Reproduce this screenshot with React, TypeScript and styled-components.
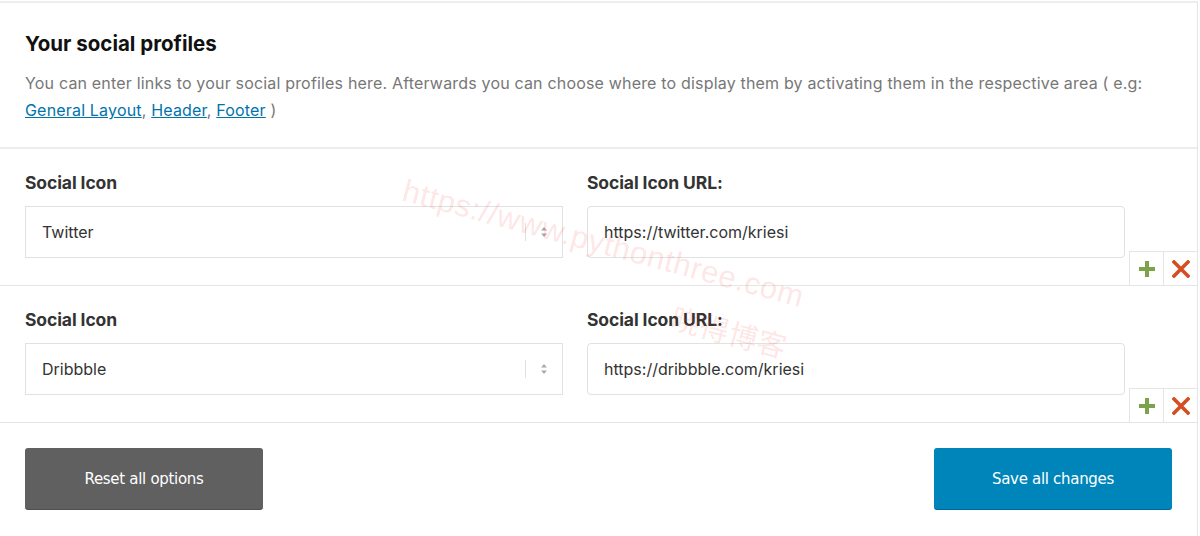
import React from "react";
import styled, { createGlobalStyle } from "styled-components";

const Global = createGlobalStyle`
  html, body { margin: 0; padding: 0; background: #fff; }
  body { font-family: Inter, "Liberation Sans", Arial, sans-serif; }
  * { box-sizing: border-box; }
`;

const Page = styled.div`
  position: relative;
  width: 1198px;
  height: 536px;
  margin-top: 1px;
  border-top: 2px solid #eeeeee;
  border-right: 1px solid #e5e5e5;
  overflow: hidden;
`;

const Intro = styled.section`
  padding: 27px 25px 23px 25px;
  border-bottom: 2px solid #ececec;
`;

const Title = styled.h3`
  margin: 0 0 12px 0;
  font-size: 20.5px;
  font-weight: 700;
  color: #111;
  line-height: 28px;
  letter-spacing: 0;
`;

const Desc = styled.p`
  margin: 0;
  font-size: 16px;
  line-height: 27px;
  color: #777;
  letter-spacing: 0.18px;
`;

const Link = styled.a`
  color: #0073aa;
  text-decoration: underline;
`;

const Row = styled.div`
  display: flex;
  border-bottom: 1px solid #e5e5e5;
`;

const Fields = styled.div`
  display: grid;
  grid-template-columns: 538px 538px;
  column-gap: 24px;
  padding: 22px 0 27px 25px;
`;

const Field = styled.div`
  display: flex;
  flex-direction: column;
`;

const Label = styled.label`
  font-size: 17.5px;
  font-weight: 700;
  color: #333;
  line-height: 24px;
  margin-bottom: 11px;
  letter-spacing: -0.1px;
`;

const SelectBox = styled.div`
  height: 52px;
  border: 1px solid #e1e1e1;
  display: flex;
  align-items: center;
  padding-left: 16px;
  font-size: 16px;
  color: #333;
  background: #fff;
`;

const SelectText = styled.span`
  flex: 1;
`;

const SelectSep = styled.span`
  width: 1px;
  height: 18px;
  background: #e0e0e0;
`;

const SelectArrows = styled.span`
  width: 36px;
  display: flex;
  justify-content: center;
  align-items: center;
`;

const InputBox = styled.div`
  height: 52px;
  border: 1px solid #e1e1e1;
  border-radius: 4px;
  display: flex;
  align-items: center;
  padding-left: 16px;
  font-size: 16px;
  color: #333;
`;

const Actions = styled.div`
  flex: 1;
  display: flex;
  justify-content: flex-end;
  align-items: flex-end;
`;

const ActionBtn = styled.button`
  width: 34px;
  height: 34px;
  padding: 0;
  margin: 0;
  background: #fff;
  border: none;
  border-top: 1px solid #e5e5e5;
  border-left: 1px solid #e5e5e5;
  display: flex;
  align-items: center;
  justify-content: center;
  cursor: pointer;
`;

const Footer = styled.div`
  display: flex;
  justify-content: space-between;
  padding: 25px 25px 0 25px;
`;

const BigButton = styled.button<{ $variant: "reset" | "save" }>`
  width: 238px;
  height: 62px;
  border: none;
  border-radius: 3px;
  color: #fff;
  font-family: "DejaVu Sans", Verdana, sans-serif;
  font-size: 15px;
  letter-spacing: -0.3px;
  background: ${(p) => (p.$variant === "save" ? "#0085ba" : "#606060")};
  border-bottom: 1px solid ${(p) => (p.$variant === "save" ? "#006799" : "#505050")};
  cursor: pointer;
`;

const Watermark = styled.div<{ $size: number }>`
  position: absolute;
  color: rgba(240, 70, 70, 0.15);
  font-size: ${(p) => p.$size}px;
  font-family: "Liberation Sans", "Noto Sans CJK SC", sans-serif;
  transform-origin: left top;
  transform: rotate(15deg);
  white-space: nowrap;
  pointer-events: none;
  letter-spacing: 0.6px;
`;

const Arrows = () => (
  <svg width="8" height="12" viewBox="0 0 8 12">
    <path d="M4 1 L7 4.5 H1 Z" fill="#aaa" />
    <path d="M4 11 L7 7.5 H1 Z" fill="#aaa" />
  </svg>
);

const Plus = () => (
  <svg width="18" height="18" viewBox="0 0 18 18">
    <path d="M7 1h4v6h6v4h-6v6H7v-6H1V7h6z" fill="#7ca34a" />
  </svg>
);

const Cross = () => (
  <svg width="18" height="18" viewBox="0 0 18 18">
    <path d="M2 2 L16 16 M16 2 L2 16" stroke="#d54e21" strokeWidth="3.6" strokeLinecap="square" />
  </svg>
);

const profiles = [
  { icon: "Twitter", url: "https://twitter.com/kriesi" },
  { icon: "Dribbble", url: "https://dribbble.com/kriesi" },
];

export default function App() {
  return (
    <>
      <Global />
      <Page>
        <Intro>
          <Title>Your social profiles</Title>
          <Desc>
            You can enter links to your social profiles here. Afterwards you can choose where to display them by
            activating them in the respective area ( e.g:
            <br />
            <Link href="#">General Layout</Link>, <Link href="#">Header</Link>, <Link href="#">Footer</Link> )
          </Desc>
        </Intro>
        {profiles.map((p) => (
          <Row key={p.icon}>
            <Fields>
              <Field>
                <Label>Social Icon</Label>
                <SelectBox>
                  <SelectText>{p.icon}</SelectText>
                  <SelectSep />
                  <SelectArrows>
                    <Arrows />
                  </SelectArrows>
                </SelectBox>
              </Field>
              <Field>
                <Label>Social Icon URL:</Label>
                <InputBox>{p.url}</InputBox>
              </Field>
            </Fields>
            <Actions>
              <ActionBtn aria-label="add">
                <Plus />
              </ActionBtn>
              <ActionBtn aria-label="remove">
                <Cross />
              </ActionBtn>
            </Actions>
          </Row>
        ))}
        <Footer>
          <BigButton $variant="reset">Reset all options</BigButton>
          <BigButton $variant="save">Save all changes</BigButton>
        </Footer>
        <Watermark $size={31} style={{ left: 408, top: 170 }}>https://www.pythonthree.com</Watermark>
        <Watermark $size={29} style={{ left: 678, top: 292 }}>晓得博客</Watermark>
      </Page>
    </>
  );
}
